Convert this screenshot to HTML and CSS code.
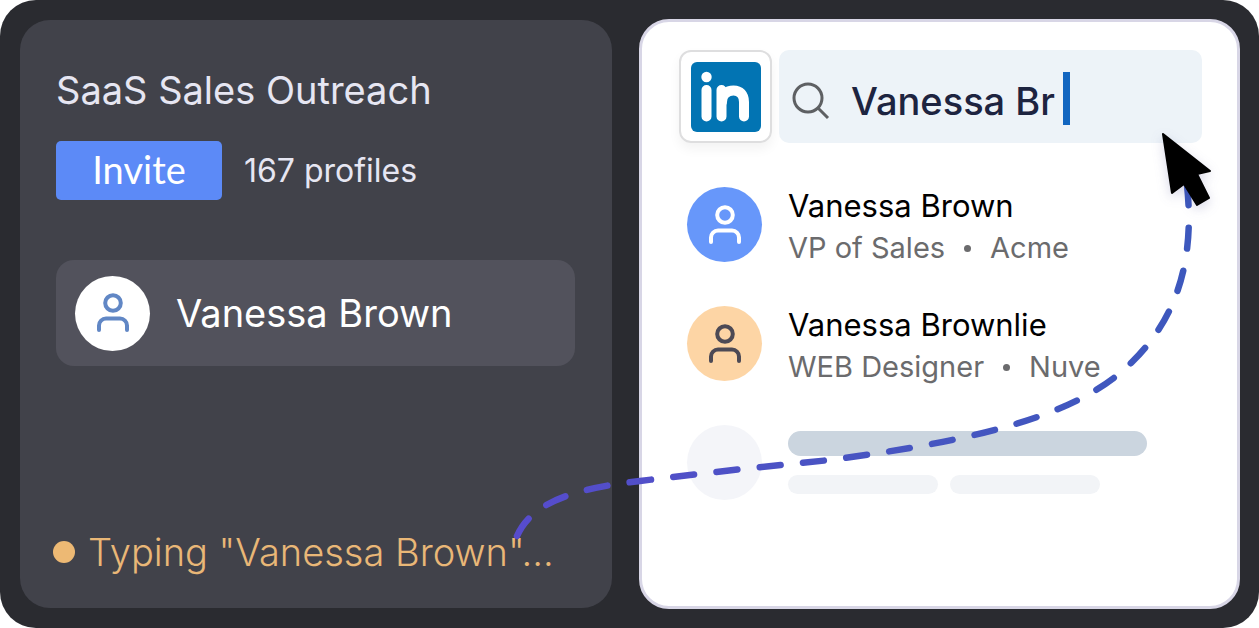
FILE: index.html
```html
<!DOCTYPE html>
<html lang="en">
    <head>
        <meta charset="utf-8" />
        <title>SaaS Sales Outreach</title>
        <meta name="viewport" content="width=device-width, initial-scale=1">
        <link rel="stylesheet" href="styles.css">
    </head>
    <body>
        <svg width="0" height="0" class="symbols" aria-hidden="true">
            <symbol id="person" viewBox="0 0 32 40">
                <circle cx="16" cy="10" r="7.800" />
                <path d="M2 37v-4.500a7 7 0 0 1 7-7h14a7 7 0 0 1 7 7v4.500" />
            </symbol>
        </svg>
        <main class="frame">
            <section class="panel campaign">
                <h1>SaaS Sales Outreach</h1>
                <div class="actions">
                    <button type="button" class="invite">Invite</button>
                    <span class="count">167 profiles</span>
                </div>
                <div class="lead">
                    <span class="avatar white"><svg><use href="#person" /></svg></span>
                    <span>Vanessa Brown</span>
                </div>
                <p class="status"><span class="dot"></span>Typing "Vanessa Brown"...</p>
            </section>
            <section class="panel results">
                <div class="search-row">
                    <div class="logo">
                        <svg viewBox="0 0 70 70" role="img" aria-label="LinkedIn">
                            <rect width="70" height="70" rx="6" fill="#0274b3" />
                            <circle cx="15.500" cy="15" r="5.200" fill="#fff" />
                            <path d="M15.500 28v26.500M30.500 28v26.500" stroke="#fff" stroke-width="10" stroke-linecap="round" />
                            <path d="M31 40c0-8 5-11.500 11.500-11.500s10.500 4 10.500 11.500v14.500" fill="none" stroke="#fff" stroke-width="10" stroke-linecap="round" />
                        </svg>
                    </div>
                    <label class="search">
                        <svg class="glass" viewBox="0 0 40 40" aria-hidden="true">
                            <circle cx="17" cy="17" r="14" />
                            <path d="M27 27l10 10" />
                        </svg>
                        <input type="text" value="Vanessa Br" size="10" aria-label="Search people">
                        <span class="caret"></span>
                    </label>
                </div>
                <ul>
                    <li>
                        <span class="avatar blue"><svg><use href="#person" /></svg></span>
                        <div class="person">
                            <h2>Vanessa Brown</h2>
                            <p><span>VP of Sales</span><i></i><span>Acme</span></p>
                        </div>
                    </li>
                    <li>
                        <span class="avatar peach"><svg><use href="#person" /></svg></span>
                        <div class="person">
                            <h2>Vanessa Brownlie</h2>
                            <p><span>WEB Designer</span><i></i><span>Nuve</span></p>
                        </div>
                    </li>
                    <li>
                        <span class="avatar empty"></span>
                        <div class="skeleton">
                            <div class="bar"></div>
                            <div class="bar short"></div>
                            <div class="bar short"></div>
                        </div>
                    </li>
                </ul>
            </section>
            <svg class="trail" viewBox="0 0 1259 628" aria-hidden="true">
                <defs>
                    <linearGradient id="trail-color" gradientUnits="userSpaceOnUse" x1="517" y1="0" x2="1190" y2="0">
                        <stop offset="0" stop-color="#574ccd" />
                        <stop offset=".5" stop-color="#4854c2" />
                        <stop offset="1" stop-color="#3d58bd" />
                    </linearGradient>
                </defs>
                <path class="dashes" d="M517 536C531 504 570 489 640 481C720 471 780 465 830 460C980 440 1080 415 1132 362C1177 318 1195 260 1187 185" />
                <path class="pointer" d="M1163 134L1210 171L1197 174L1209 198L1197 205L1184 184L1172 193Z" />
            </svg>
        </main>
    </body>
</html>
```
FILE: styles.css
```css
* {
    box-sizing: border-box;
}

body {
    margin: 0;
    background: white;
    font-family: Inter, sans-serif;
}

h1, h2, p, ul {
    margin: 0;
    padding: 0;
    font-weight: 400;
}

.symbols {
    position: absolute;
}

.frame {
    position: relative;
    display: grid;
    grid-template-columns: 592fr 601fr;
    gap: 27px;
    min-height: 100vh;
    padding: 20px 19px 20px 20px;
    background: #2a2b30;
    border-radius: 36px;
}

.panel {
    border-radius: 30px;
}

.campaign {
    display: flex;
    flex-direction: column;
    padding: 46px 37px 32px 36px;
    background: #41424a;
    color: #e6e6f2;
}

h1 {
    font-size: 38px;
    line-height: 48px;
}

.actions {
    display: flex;
    align-items: center;
    gap: 22px;
    margin-top: 27px;
}

.invite {
    width: 166px;
    height: 59px;
    padding: 0 0 4px;
    border: 0;
    border-radius: 5px;
    background: #5c8af7;
    color: white;
    font-family: Lato, sans-serif;
    font-size: 38px;
}

.count {
    font-size: 32px;
}

.lead {
    display: flex;
    align-items: center;
    gap: 26px;
    height: 106px;
    margin-top: 60px;
    padding: 0 19px;
    border-radius: 18px;
    background: #52525c;
    color: white;
    font-size: 38px;
}

.avatar {
    display: flex;
    align-items: center;
    justify-content: center;
    flex: none;
    width: 75px;
    height: 75px;
    border-radius: 50%;
}

.avatar svg {
    width: 32px;
    height: 40px;
    fill: none;
    stroke: currentColor;
    stroke-width: 4px;
    stroke-linecap: round;
}

.white {
    background: white;
    color: #6187c5;
}

.blue {
    background: #6797fa;
    color: white;
}

.peach {
    background: #fdd5a5;
    color: #4d4a55;
}

.empty {
    background: #f4f5f9;
}

.status {
    display: flex;
    align-items: center;
    gap: 13px;
    margin: auto -3px 0;
    color: #e9b777;
    font-size: 38px;
    font-weight: 300;
    line-height: 48px;
}

.dot {
    width: 22px;
    height: 22px;
    border-radius: 50%;
    background: #edb974;
}

.results {
    margin: -1px 0;
    padding: 28px 35px 28px 37px;
    border: 3px solid #d8d6e6;
    background: white;
}

.search-row {
    display: flex;
    gap: 7px;
}

.logo {
    display: flex;
    align-items: center;
    justify-content: center;
    flex: none;
    width: 93px;
    height: 93px;
    border: 2px solid #dededf;
    border-radius: 12px;
    box-shadow: 0 6px 12px rgba(0, 0, 0, 0.05);
}

.logo svg {
    width: 70px;
    height: 70px;
}

.search {
    display: flex;
    align-items: center;
    flex: 1;
    padding: 8px 12px 0;
    border-radius: 10px;
    background: #edf3f8;
}

.glass {
    width: 40px;
    height: 40px;
    fill: none;
    stroke: #5e6063;
    stroke-width: 3px;
}

.search input {
    field-sizing: content;
    margin-left: 20px;
    padding: 0;
    border: 0;
    outline: 0;
    background: none;
    color: #1d2440;
    font: 500 38px Inter, sans-serif;
}

.caret {
    width: 7px;
    height: 53px;
    margin: 0 0 4px 8px;
    background: #1266c0;
}

ul {
    display: grid;
    gap: 39px;
    margin: 44px 8px 0;
    list-style: none;
}

li {
    display: flex;
    gap: 26px;
}

h2 {
    font-size: 31px;
    line-height: 38px;
    color: black;
}

.person p {
    display: flex;
    align-items: center;
    margin-top: 4px;
    color: #6b6b6d;
    font-size: 29px;
    line-height: 38px;
}

.person i {
    width: 7px;
    height: 7px;
    margin: 0 19px;
    border-radius: 50%;
    background: #6b6b6d;
}

.skeleton {
    display: flex;
    flex-wrap: wrap;
    align-content: flex-start;
    gap: 19px 12px;
    width: 359px;
    padding-top: 6px;
}

.bar {
    width: 100%;
    height: 25px;
    border-radius: 13px;
    background: #cbd5df;
}

.short {
    width: 150px;
    height: 19px;
    border-radius: 10px;
    background: #f2f4f7;
}

.trail {
    position: absolute;
    inset: 0;
    width: 100%;
    pointer-events: none;
}

.dashes {
    fill: none;
    stroke: url(#trail-color);
    stroke-width: 6.5px;
    stroke-linecap: round;
    stroke-dasharray: 21 22.5;
}

.pointer {
    stroke: black;
    stroke-width: 2px;
    stroke-linejoin: round;
    filter: drop-shadow(0 4px 6px rgba(60, 60, 140, 0.2));
}
```
